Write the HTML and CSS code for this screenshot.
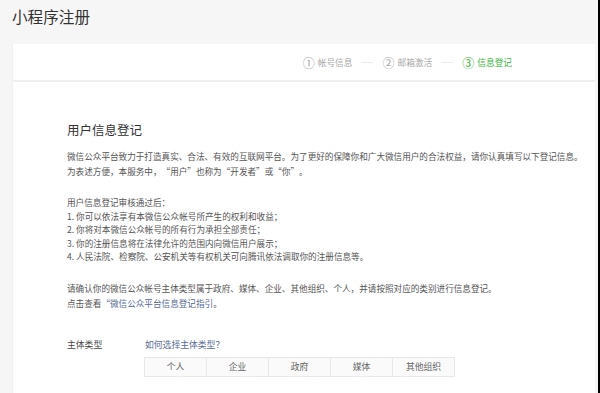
FILE: index.html
```html
<!DOCTYPE html>
<html lang="zh-CN">
<head>
  <meta charset="UTF-8" />
  <title>小程序注册</title>
  <link rel="stylesheet" href="styles.css">
</head>
<body>

<div class="page">
  <h1 class="page-title">小程序注册</h1>

  <div class="card">
    <div class="steps">
      <span class="step"><span class="step-num">①</span>帐号信息</span>
      <span class="step-line"></span>
      <span class="step"><span class="step-num">②</span>邮箱激活</span>
      <span class="step-line"></span>
      <span class="step active"><span class="step-num">③</span>信息登记</span>
    </div>

    <div class="content">
      <h2>用户信息登记</h2>

      <p class="text">
        微信公众平台致力于打造真实、合法、有效的互联网平台。为了更好的保障你和广大微信用户的合法权益，请你认真填写以下登记信息。<br>
        为表述方便，本服务中，“用户”也称为“开发者”或“你”。
      </p>

      <p class="text list">
        用户信息登记审核通过后：<br>
        1. 你可以依法享有本微信公众帐号所产生的权利和收益；<br>
        2. 你将对本微信公众帐号的所有行为承担全部责任；<br>
        3. 你的注册信息将在法律允许的范围内向微信用户展示；<br>
        4. 人民法院、检察院、公安机关等有权机关可向腾讯依法调取你的注册信息等。
      </p>

      <p class="text">
        请确认你的微信公众帐号主体类型属于政府、媒体、企业、其他组织、个人，并请按照对应的类别进行信息登记。<br>
        点击查看<a href="#">“微信公众平台信息登记指引</a>。
      </p>

      <div class="form-row">
        <label class="form-label">主体类型</label>
        <div class="form-field">
          <a href="#" class="help-link">如何选择主体类型？</a>
          <div class="type-tabs">
            <span class="type-tab">个人</span>
            <span class="type-tab">企业</span>
            <span class="type-tab">政府</span>
            <span class="type-tab">媒体</span>
            <span class="type-tab">其他组织</span>
          </div>
        </div>
      </div>
    </div>
  </div>
</div>

</body>
</html>
```

FILE: styles.css
```css
* { box-sizing: border-box; }

html, body {
  height: 100%;
}

body {
  margin: 0;
  background-color: #f6f6f6;
  font-family: "Noto Sans CJK SC", "Noto Sans", sans-serif;
  color: #555;
  overflow: hidden;
  text-spacing-trim: space-all;
}

.page {
  height: 100%;
  width: 600px;
  border-right: 2px solid #000;
  padding: 0 3px 0 12px;
  display: flex;
  flex-direction: column;
}

.page-title {
  margin: 0;
  padding-top: 6px;
  height: 44px;
  flex-shrink: 0;
  font-size: 15.6px;
  line-height: 20px;
  font-weight: normal;
  color: #333;
}

.card {
  flex: 1;
  background-color: #efefef;
  border-left: 1px solid #f0f0f0;
  display: flex;
  flex-direction: column;
  gap: 2px;
  overflow: hidden;
}

.steps {
  background: #fff;
  height: 36px;
  flex-shrink: 0;
  display: flex;
  align-items: center;
  justify-content: flex-end;
  padding-right: 83px;
  font-size: 8.7px;
  color: #a8a8a8;
}

.step {
  display: flex;
  align-items: center;
}

.step-num {
  font-size: 12px;
  margin-right: 3px;
}

.step.active {
  color: #3ab43a;
}

.step-line {
  width: 12px;
  height: 1px;
  margin: 0 9px;
  background: #ececec;
}

.content {
  flex: 1;
  background: #fff;
  padding: 40px 0 0 54px;
}

h2 {
  margin: 0 0 11px;
  font-size: 12.5px;
  line-height: 16px;
  font-weight: normal;
  color: #333;
}

.text {
  margin: 0 0 17px;
  font-size: 8.6px;
  line-height: 15px;
  color: #555;
}

.text.list {
  line-height: 13.5px;
}

.text a,
.help-link {
  color: #576b95;
  text-decoration: none;
}

.form-row {
  display: flex;
  margin-top: 28px;
}

.form-label {
  width: 78px;
  font-size: 8.8px;
  line-height: 12px;
  color: #444;
}

.form-field {
  display: flex;
  flex-direction: column;
}

.help-link {
  font-size: 8.8px;
  line-height: 12px;
}

.type-tabs {
  display: flex;
  margin-top: 6px;
}

.type-tab {
  width: 63px;
  height: 20px;
  line-height: 18px;
  text-align: center;
  font-size: 8.8px;
  color: #666;
  background: #fafafa;
  border: 1px solid #e8e8e8;
  margin-left: -1px;
}
```
